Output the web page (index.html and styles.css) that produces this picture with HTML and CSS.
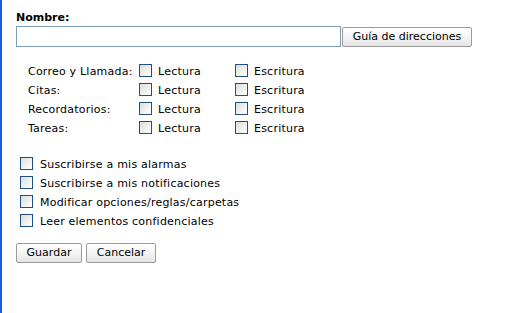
FILE: index.html
```html
<!DOCTYPE html>
<html lang="es">
<head>
<meta charset="utf-8">
<title>Permisos</title>
<link rel="stylesheet" href="styles.css">
</head>
<body>
<div class="frame">
  <form class="form">
    <div class="name-label">Nombre:</div>
    <div class="name-row">
      <input class="name-input" type="text">
      <button type="button" class="btn btn-dir">Guía de direcciones</button>
    </div>
    <div class="perm-grid">
      <div class="perm-name">Correo y Llamada:</div>
      <label class="perm-cell"><input type="checkbox" class="cb"><span>Lectura</span></label>
      <label class="perm-cell"><input type="checkbox" class="cb"><span>Escritura</span></label>
      <div class="perm-name">Citas:</div>
      <label class="perm-cell"><input type="checkbox" class="cb"><span>Lectura</span></label>
      <label class="perm-cell"><input type="checkbox" class="cb"><span>Escritura</span></label>
      <div class="perm-name">Recordatorios:</div>
      <label class="perm-cell"><input type="checkbox" class="cb"><span>Lectura</span></label>
      <label class="perm-cell"><input type="checkbox" class="cb"><span>Escritura</span></label>
      <div class="perm-name">Tareas:</div>
      <label class="perm-cell"><input type="checkbox" class="cb"><span>Lectura</span></label>
      <label class="perm-cell"><input type="checkbox" class="cb"><span>Escritura</span></label>
    </div>
    <div class="opt-list">
      <label class="opt"><input type="checkbox" class="cb"><span>Suscribirse a mis alarmas</span></label>
      <label class="opt"><input type="checkbox" class="cb"><span>Suscribirse a mis notificaciones</span></label>
      <label class="opt"><input type="checkbox" class="cb"><span>Modificar opciones/reglas/carpetas</span></label>
      <label class="opt"><input type="checkbox" class="cb"><span>Leer elementos confidenciales</span></label>
    </div>
    <div class="actions">
      <button type="button" class="btn btn-save">Guardar</button>
      <button type="button" class="btn btn-cancel">Cancelar</button>
    </div>
  </form>
</div>
</body>
</html>
```
FILE: styles.css
```css
html, body {
  margin: 0;
  padding: 0;
  background: #fff;
}
body {
  font-family: "DejaVu Sans", Verdana, sans-serif;
  font-size: 11px;
  letter-spacing: 0.22px;
  color: #000;
}
.frame {
  box-sizing: border-box;
  height: 313px;
  border-left: 2px solid #1560dc;
}
.form {
  margin: 0;
  padding: 11px 0 0 14px;
}
.name-label {
  font-weight: bold;
  letter-spacing: 0;
  line-height: 14px;
  height: 14px;
}
.name-row {
  display: flex;
  align-items: center;
  margin-top: 1px;
}
.name-input {
  box-sizing: border-box;
  width: 325px;
  height: 21px;
  margin: 0;
  border: 1px solid #7f9db9;
  padding: 1px 3px;
  font: inherit;
  outline: none;
}
.btn {
  box-sizing: border-box;
  height: 20px;
  margin: 0;
  padding: 0 4px;
  border: 1px solid #9a9a9a;
  border-radius: 2px;
  background: linear-gradient(#ffffff, #f4f4f4 50%, #e4e4e4);
  font: inherit;
  font-size: 11px;
  line-height: 18px;
  color: #000;
}
.btn-dir {
  width: 130px;
  margin-left: 1px;
}
.perm-grid {
  display: grid;
  grid-template-columns: 111px 96px auto;
  grid-auto-rows: 19px;
  margin-top: 14px;
  padding-left: 12px;
  align-items: center;
}
.perm-name {
  line-height: 14px;
}
.perm-cell, .opt {
  display: flex;
  align-items: center;
  gap: 6px;
}
.perm-cell span, .opt span, .perm-name {
  padding-top: 2px;
}
.cb {
  -webkit-appearance: none;
  appearance: none;
  box-sizing: border-box;
  width: 13px;
  height: 13px;
  margin: 0;
  flex: none;
  border: 1px solid #1c5180;
  background: linear-gradient(135deg, #dcdcd7, #fbfbf9 85%);
}
.cb:checked {
  background-image: none;
}
.opt-list {
  display: grid;
  grid-auto-rows: 19px;
  align-items: center;
  margin-top: 17px;
  padding-left: 4px;
}
.opt {
  gap: 7px;
}
.actions {
  display: flex;
  gap: 4px;
  margin-top: 13px;
}
.btn-save {
  width: 66px;
}
.btn-cancel {
  width: 70px;
}
```
